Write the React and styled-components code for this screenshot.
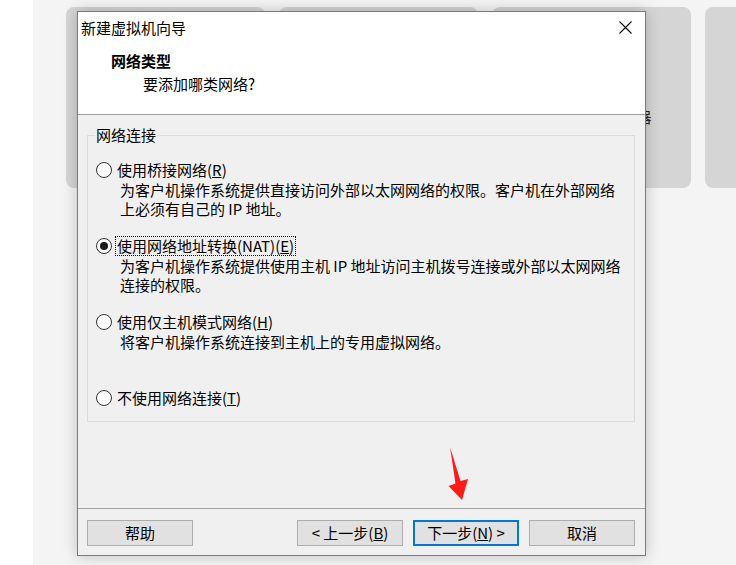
import React from 'react';
import styled, { createGlobalStyle } from 'styled-components';

const Global = createGlobalStyle`
  html, body { margin: 0; padding: 0; }
  body {
    width: 736px;
    height: 565px;
    overflow: hidden;
    font-family: "Noto Sans CJK SC", "Noto Sans", sans-serif;
    color: #000;
  }
`;

const Desktop = styled.div`
  position: relative;
  width: 736px;
  height: 565px;
  display: flex;
  overflow: hidden;
  background: #f4f4f4;
`;

const Strip = styled.div`
  width: 33px;
  flex-shrink: 0;
  background: #fff;
`;

const CardRow = styled.div`
  display: flex;
  gap: 14px;
  padding: 7px 0 0 33px;
  align-items: flex-start;
`;

const Card = styled.div`
  width: 199px;
  height: 181px;
  flex-shrink: 0;
  border-radius: 8px;
  background: #d5d5d5;
  display: flex;
  justify-content: center;
  padding-top: 100px;
  box-sizing: border-box;
  font-size: 15px;
  line-height: 20px;
  color: #222;
`;

const Dialog = styled.div`
  position: absolute;
  left: 77px;
  top: 11px;
  width: 569px;
  height: 545px;
  box-sizing: border-box;
  border: 1px solid #7a7a7a;
  background: #f0f0f0;
  box-shadow: 0 0 14px rgba(0, 0, 0, 0.22);
  display: flex;
  flex-direction: column;
`;

const TitleBar = styled.div`
  height: 30px;
  display: flex;
  align-items: center;
  justify-content: space-between;
  padding: 0 13px 0 3px;
  background: #fff;
  font-size: 15px;
`;

const Header = styled.div`
  height: 73px;
  box-sizing: border-box;
  padding: 9px 0 0 33px;
  background: #fff;
  border-bottom: 1px solid #a0a0a0;
`;

const HeaderTitle = styled.div`
  font-size: 15px;
  line-height: 20px;
  font-weight: 700;
`;

const HeaderSub = styled.div`
  font-size: 15px;
  line-height: 20px;
  margin: 3px 0 0 32px;
`;

const Body = styled.div`
  flex: 1;
  padding: 10px 10px 0 9px;
`;

const Group = styled.fieldset`
  margin: 0;
  height: 297px;
  box-sizing: border-box;
  border: 1px solid #dcdcdc;
  padding: 15px 8px 0 8px;
  min-width: 0;
`;

const Legend = styled.legend`
  padding: 0 1px;
  margin-left: -1px;
  font-size: 15px;
  line-height: 20px;
`;

const Option = styled.div`
  height: 76px;
`;

const OptionRow = styled.div`
  display: flex;
  align-items: center;
  height: 20px;
`;

const Radio = styled.span`
  width: 16px;
  height: 16px;
  box-sizing: border-box;
  border-radius: 50%;
  border: 1px solid #333;
  background: #fff;
  display: flex;
  align-items: center;
  justify-content: center;
  margin-right: 5px;
  flex-shrink: 0;
  &::after {
    content: '';
    width: 8px;
    height: 8px;
    border-radius: 50%;
    background: ${p => (p.$checked ? '#1a1a1a' : 'transparent')};
  }
`;

const Label = styled.span`
  font-size: 15px;
  line-height: 18px;
  white-space: nowrap;
  outline: ${p => (p.$focused ? '1px dotted #000' : 'none')};
  outline-offset: 0;
  padding: 0 1px;
  margin-left: -1px;
`;

const Desc = styled.div`
  margin: 1px 0 0 24px;
  font-size: 15px;
  line-height: 18px;
  white-space: nowrap;
`;

const Footer = styled.div`
  border-top: 1px solid #a0a0a0;
  padding: 11px 10px 9px 9px;
  display: flex;
  justify-content: space-between;
`;

const ButtonGroup = styled.div`
  display: flex;
  gap: 10px;
`;

const Button = styled.button`
  width: 106px;
  height: 26px;
  box-sizing: border-box;
  border: ${p => (p.$default ? '2px solid #0078d7' : '1px solid #adadad')};
  background: #e1e1e1;
  font-family: inherit;
  font-size: 15px;
  line-height: 20px;
  color: #000;
  padding: 0;
  display: flex;
  align-items: center;
  justify-content: center;
  white-space: nowrap;
`;

const Arrow = styled.svg`
  position: absolute;
  left: 440px;
  top: 440px;
`;

const options = [
  {
    key: 'R',
    label: '使用桥接网络',
    lines: ['为客户机操作系统提供直接访问外部以太网网络的权限。客户机在外部网络', '上必须有自己的 IP 地址。'],
  },
  {
    key: 'E',
    label: '使用网络地址转换(NAT)',
    lines: ['为客户机操作系统提供使用主机 IP 地址访问主机拨号连接或外部以太网网络', '连接的权限。'],
    checked: true,
  },
  {
    key: 'H',
    label: '使用仅主机模式网络',
    lines: ['将客户机操作系统连接到主机上的专用虚拟网络。'],
  },
  { key: 'T', label: '不使用网络连接', lines: [] },
];

export default function App() {
  return (
    <>
      <Global />
      <Desktop>
        <Strip />
        <CardRow>
          <Card />
          <Card />
          <Card>连接到远程服务器</Card>
          <Card />
        </CardRow>

        <Dialog>
          <TitleBar>
            <span>新建虚拟机向导</span>
            <svg width="13" height="13" viewBox="0 0 13 13">
              <path d="M0.5 0.5 L12.5 12.5 M12.5 0.5 L0.5 12.5" stroke="#000" strokeWidth="1.1" fill="none" />
            </svg>
          </TitleBar>
          <Header>
            <HeaderTitle>网络类型</HeaderTitle>
            <HeaderSub>要添加哪类网络?</HeaderSub>
          </Header>
          <Body>
            <Group>
              <Legend>网络连接</Legend>
              {options.map(o => (
                <Option key={o.key}>
                  <OptionRow>
                    <Radio $checked={o.checked} />
                    <Label $focused={o.checked}>
                      {o.label}(<u>{o.key}</u>)
                    </Label>
                  </OptionRow>
                  {o.lines.map(l => (
                    <Desc key={l}>{l}</Desc>
                  ))}
                </Option>
              ))}
            </Group>
          </Body>
          <Footer>
            <Button>帮助</Button>
            <ButtonGroup>
              <Button>&lt; 上一步(<u>B</u>)</Button>
              <Button $default>下一步(<u>N</u>) &gt;</Button>
              <Button>取消</Button>
            </ButtonGroup>
          </Footer>
        </Dialog>

        <Arrow width="40" height="70" viewBox="0 0 40 70">
          <polygon points="10,7 20.5,41 28,39 22,60 8.5,46 15.5,43.5" fill="#ff1a1a" />
        </Arrow>
      </Desktop>
    </>
  );
}
